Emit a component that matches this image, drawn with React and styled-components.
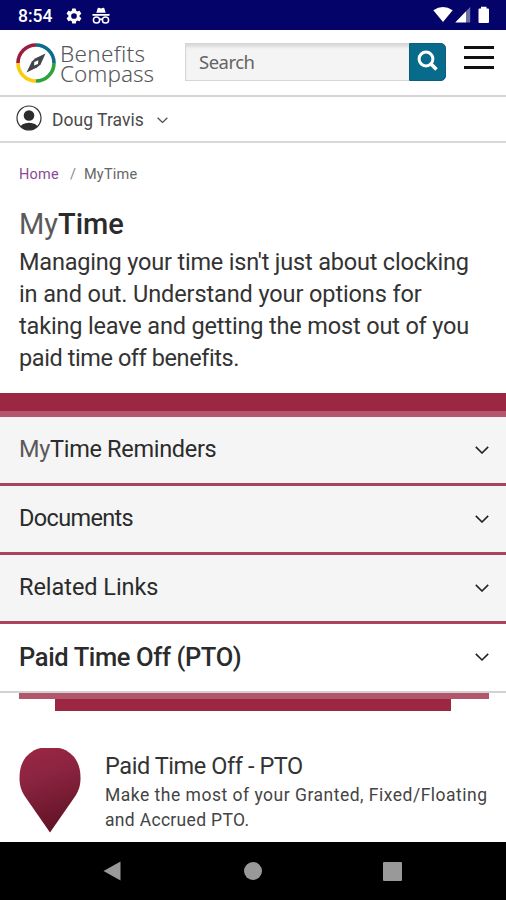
import React from 'react'
import styled, { createGlobalStyle } from 'styled-components'

const reminders = [
  { lead: 'My', title: 'Time Reminders', spacing: -0.31 },
  { title: 'Documents', spacing: -0.65 },
  { title: 'Related Links', spacing: -0.05 },
]

const intro = [
  { text: "Managing your time isn't just about clocking", spacing: -0.19 },
  { text: 'in and out. Understand your options for', spacing: -0.11 },
  { text: 'taking leave and getting the most out of you', spacing: -0.16 },
  { text: 'paid time off benefits.', spacing: -0.42 },
]

const Chevron = ({ size = 14, color = '#222', weight = 1.6 }) => (
  <svg width={size} height={size * 0.6} viewBox="0 0 14 8.4" fill="none" stroke={color} strokeWidth={weight}>
    <path d="M0.8 0.9 L7 7 L13.2 0.9" />
  </svg>
)

const GearIcon = () => (
  <svg width="18" height="18" viewBox="0 0 24 24" fill="#fff">
    <path d="M19.4 13a7.6 7.6 0 0 0 0-2l2.1-1.6a.5.5 0 0 0 .1-.7l-2-3.4a.5.5 0 0 0-.6-.2l-2.5 1a7.3 7.3 0 0 0-1.7-1l-.4-2.6a.5.5 0 0 0-.5-.5h-4a.5.5 0 0 0-.5.5L9 5.1a7.3 7.3 0 0 0-1.7 1l-2.5-1a.5.5 0 0 0-.6.2l-2 3.4a.5.5 0 0 0 .1.7L4.5 11a7.6 7.6 0 0 0 0 2l-2.1 1.6a.5.5 0 0 0-.1.7l2 3.4c.1.2.4.3.6.2l2.5-1a7.3 7.3 0 0 0 1.7 1l.4 2.6c0 .3.2.5.5.5h4c.3 0 .5-.2.5-.5l.4-2.6a7.3 7.3 0 0 0 1.700-1l2.500 1c.2.1.5 0 .6-.2l2-3.400a.5.5 0 0 0-.1-.7zM12 15.800a3.800 3.800 0 1 1 0-7.600 3.800 3.800 0 0 1 0 7.600z" />
  </svg>
)

const IncognitoIcon = () => (
  <svg width="18" height="18" viewBox="0 0 18 18" fill="#fff">
    <path d="M4.3 5.8 L5.7 1.3 Q6 0.6 6.8 0.8 L9 1.4 L11.2 0.8 Q12 0.6 12.3 1.3 L13.7 5.8Z" />
    <path d="M0.5 7 H17.5 V8.8 H0.5Z" />
    <g fill="none" stroke="#fff" strokeWidth="1.5">
      <circle cx="4.5" cy="13" r="3.1" />
      <circle cx="13.5" cy="13" r="3.1" />
      <path d="M7.5 12.8 Q9 11.5 10.5 12.8" />
    </g>
  </svg>
)

const SignalIcons = () => (
  <svg width="58" height="18" viewBox="0 0 58 18" fill="#fff">
    <path d="M0.3 4.2 Q10 -2.2 19.7 4.2 L10 16Z" />
    <path d="M22.2 16.5 L33 5.2 V16.5Z" />
    <path d="M33 5.2 L37.2 1 V16.5 H33Z" fill="#6f6fa8" />
    <path d="M48 0.8 H53.500 V2.500 H55 Q56 2.500 56 3.500 V16 Q56 17 55 17 H46.500 Q45.500 17 45.500 16 V3.500 Q45.500 2.500 46.500 2.500 H48Z" />
  </svg>
)

const CompassLogo = () => (
  <svg width="40" height="40" viewBox="0 0 40 40" fill="none">
    <g strokeWidth="3.6">
      <path d="M2 20 A18 18 0 0 1 20 2" stroke="#9b1d40" />
      <path d="M20 2 A18 18 0 0 1 38 20" stroke="#0c6c8c" />
      <path d="M38 20 A18 18 0 0 1 20 38" stroke="#2fa23c" />
      <path d="M20 38 A18 18 0 0 1 2 20" stroke="#fccb0c" />
    </g>
    <path d="M29.5 10.5 L24.6 21.5 L21 24.500 L10.500 29.500 L15.800 18.500 L19.500 15.300Z" fill="#42464b" />
    <path d="M22.300 17.300 L22 21 L18 22.600 L18.300 18.900Z" fill="#fff" />
  </svg>
)

const UserIcon = () => (
  <svg width="26" height="26" viewBox="0 0 26 26">
    <clipPath id="avatar"><circle cx="13" cy="13" r="12" /></clipPath>
    <circle cx="13" cy="13" r="12" fill="#fff" stroke="#333" strokeWidth="1.2" />
    <circle cx="13" cy="10.5" r="5.3" fill="#2d2d2d" />
    <ellipse cx="13" cy="23" rx="9" ry="5.2" fill="#2d2d2d" clipPath="url(#avatar)" />
  </svg>
)

const SearchIcon = () => (
  <svg width="22" height="22" viewBox="0 0 22 22" fill="none" stroke="#fff">
    <circle cx="9" cy="9" r="6.9" strokeWidth="3" />
    <path d="M13.8 13.8 L19.5 19.5" strokeWidth="3.6" />
  </svg>
)

const PinIcon = () => (
  <svg width="62" height="86" viewBox="0 0 62 86">
    <defs>
      <linearGradient id="pin" x1="0" y1="0" x2="0.25" y2="1">
        <stop offset="0" stopColor="#9b2743" />
        <stop offset="0.4" stopColor="#8b2440" />
        <stop offset="1" stopColor="#651427" />
      </linearGradient>
    </defs>
    <path d="M22 1 H40 C46 2 52.500 6 56.500 12 C60 17.500 61.500 23 61.500 31 C61.500 38 60 43.500 56 49.500 L31 85.500 L6 49.500 C2 43.500 0.500 38 0.500 31 C0.500 23 2 17.500 5.500 12 C9.500 6 16 2 22 1Z" fill="url(#pin)" />
  </svg>
)

const App = () => {
  return (
    <>
      <GlobalStyle />
      <Screen>
        <StatusBar>
          <Clock>8:54</Clock>
          <GearIcon />
          <IncognitoIcon />
          <Signals><SignalIcons /></Signals>
        </StatusBar>
        <Header>
          <CompassLogo />
          <Brand>
            <BrandLine $spacing={0.3}>Benefits</BrandLine>
            <BrandLine $spacing={0}>Compass</BrandLine>
          </Brand>
          <SearchBox>
            <SearchField>Search</SearchField>
            <SearchButton aria-label="Search"><SearchIcon /></SearchButton>
          </SearchBox>
          <MenuButton aria-label="Menu"><Bar /><Bar /><Bar /></MenuButton>
        </Header>
        <UserBar>
          <UserIcon />
          <UserName>Doug Travis</UserName>
          <UserChevron><Chevron size={11} color="#555" weight={1.7} /></UserChevron>
        </UserBar>
        <Breadcrumb>
          <HomeLink>Home</HomeLink>
          <Slash>/</Slash>
          <Crumb>MyTime</Crumb>
        </Breadcrumb>
        <Title><Muted>My</Muted>Time</Title>
        <Intro>
          {intro.map((line) => <Line key={line.text} $spacing={line.spacing}>{line.text}</Line>)}
        </Intro>
        <Band />
        {reminders.map((item) => (
          <Row key={item.title}>
            <RowText $spacing={item.spacing}>{item.lead && <Muted>{item.lead}</Muted>}{item.title}</RowText>
            <Chevron />
          </Row>
        ))}
        <Row $open>
          <RowText $open $spacing={-0.37}>Paid Time Off (PTO)</RowText>
          <Chevron />
        </Row>
        <LightStripe />
        <DarkStripe />
        <Card>
          <PinIcon />
          <CardBody>
            <CardTitle>Paid Time Off - PTO</CardTitle>
            <CardLine $spacing={0.5}>Make the most of your Granted, Fixed/Floating</CardLine>
            <CardLine $spacing={0.32}>and Accrued PTO.</CardLine>
          </CardBody>
        </Card>
        <NavBar>
          <svg width="18" height="20" viewBox="0 0 18 20"><path d="M0.5 10 L17.5 0.5 V19.5Z" fill="#999" /></svg>
          <HomeDot />
          <RecentSquare />
        </NavBar>
      </Screen>
    </>
  )
}

const GlobalStyle = createGlobalStyle`
  * { box-sizing: border-box; }
  body {
    margin: 0;
    background: #fff;
    font-family: Roboto, "Liberation Sans", sans-serif;
    color: #2b2b2b;
  }
  svg { display: block; flex: none; }
`;

const Screen = styled.div`
  width: 506px;
  height: 900px;
  display: flex;
  flex-direction: column;
  overflow: hidden;
  white-space: nowrap;
`;

const StatusBar = styled.div`
  height: 30px;
  flex: none;
  display: flex;
  align-items: center;
  padding: 1px 15px 0 18px;
  gap: 9px;
  background: #03036a;
`;

const Clock = styled.span`
  width: 38px;
  font-size: 17.5px;
  font-weight: 500;
  color: #fff;
`;

const Signals = styled.div`
  margin-left: auto;
  padding-bottom: 1px;
`;

const Header = styled.header`
  height: 67px;
  flex: none;
  display: flex;
  align-items: flex-start;
  padding: 13px 12px 0 16px;
  border-bottom: 2px solid #d5d5d5;
`;

const Brand = styled.div`
  width: 125px;
  margin: 1px 0 0 4px;
  color: #54575b;
  font-family: "Noto Sans", sans-serif;
  font-size: 22.5px;
  font-weight: 300;
`;

const BrandLine = styled.div`
  line-height: 20px;
  letter-spacing: ${({ $spacing }) => $spacing}px;
`;

const SearchBox = styled.div`
  display: flex;
  width: 261px;
  height: 38px;
`;

const SearchField = styled.div`
  flex: 1;
  padding-left: 13px;
  line-height: 35px;
  border: 1px solid #d6d6d6;
  border-right: 0;
  background: #f4f4f4;
  box-shadow: inset 0 4px 3px -1px #dadada;
  color: #646464;
  font-family: "Noto Sans", sans-serif;
  font-size: 18.5px;
  letter-spacing: -0.5px;
`;

const SearchButton = styled.button`
  width: 37px;
  padding: 0 0 2px;
  display: flex;
  align-items: center;
  justify-content: center;
  border: 1px solid #07607f;
  border-radius: 0 5px 5px 0;
  background: #086b8c;
`;

const MenuButton = styled.button`
  display: flex;
  flex-direction: column;
  gap: 7px;
  margin: 3px 0 0 18px;
  padding: 0;
  border: 0;
  background: none;
`;

const Bar = styled.span`
  width: 30px;
  height: 3px;
  background: #111;
`;

const UserBar = styled.div`
  height: 46px;
  flex: none;
  display: flex;
  align-items: center;
  padding: 0 16px 2px;
  border-bottom: 2px solid #d8d8d8;
`;

const UserName = styled.span`
  width: 105px;
  margin: 3px 0 0 10px;
  font-size: 17.5px;
  letter-spacing: 0.03px;
  color: #4a4a4a;
`;

const UserChevron = styled.span`
  margin-top: 4px;
`;

const Breadcrumb = styled.nav`
  height: 62px;
  flex: none;
  display: flex;
  align-items: center;
  padding-left: 19px;
  font-size: 14.5px;
  letter-spacing: 0.2px;
  color: #666;
`;

const HomeLink = styled.a`
  width: 51px;
  color: #8a4a94;
`;

const Slash = styled.span`
  width: 14px;
  color: #888;
`;

const Crumb = styled.span``;

const Title = styled.h1`
  height: 41px;
  margin: 0;
  padding-left: 19px;
  flex: none;
  font-size: 29px;
  font-weight: 500;
  line-height: 38px;
`;

const Muted = styled.span`
  font-weight: 400;
  color: #5a5a5a;
`;

const Intro = styled.div`
  height: 147px;
  flex: none;
  padding-left: 19px;
  font-size: 23.5px;
  color: #333;
`;

const Line = styled.div`
  line-height: 32px;
  letter-spacing: ${({ $spacing }) => $spacing}px;
`;

const Band = styled.div`
  height: 24px;
  flex: none;
  background: #9b2743;
  border-bottom: 6px solid #b5566e;
`;

const Row = styled.div`
  height: 69px;
  flex: none;
  display: flex;
  align-items: center;
  justify-content: space-between;
  padding: 0 17px 0 19px;
  background: ${({ $open }) => ($open ? '#fff' : '#f5f5f5')};
  border-bottom: ${({ $open }) => ($open ? '2px solid #d2d2d2' : '3px solid #a8445e')};
`;

const RowText = styled.span`
  font-size: ${({ $open }) => ($open ? '25.5px' : '23.5px')};
  font-weight: ${({ $open }) => ($open ? 500 : 400)};
  letter-spacing: ${({ $spacing }) => $spacing}px;
  padding-bottom: ${({ $open }) => ($open ? 1 : 2)}px;
`;

const LightStripe = styled.div`
  height: 6px;
  flex: none;
  margin: 0 17px 0 19px;
  background: #b2566c;
`;

const DarkStripe = styled.div`
  height: 12px;
  flex: none;
  margin: 0 55px;
  background: #9b2743;
`;

const Card = styled.section`
  height: 131px;
  flex: none;
  display: flex;
  padding: 36px 0 0 19px;
`;

const CardBody = styled.div`
  margin: 2px 0 0 24px;
`;

const CardTitle = styled.div`
  font-size: 23.5px;
  line-height: 34px;
  letter-spacing: -0.42px;
  color: #333;
`;

const CardLine = styled.div`
  font-size: 17.5px;
  line-height: 24.5px;
  letter-spacing: ${({ $spacing }) => $spacing}px;
  color: #444;
`;

const NavBar = styled.div`
  flex: 1;
  display: flex;
  align-items: center;
  padding-left: 103px;
  background: #000;
`;

const HomeDot = styled.span`
  width: 18px;
  height: 18px;
  margin: 0 121px 0 123px;
  border-radius: 50%;
  background: #999;
`;

const RecentSquare = styled.span`
  width: 19px;
  height: 19px;
  border-radius: 1px;
  background: #999;
`;

export default App
